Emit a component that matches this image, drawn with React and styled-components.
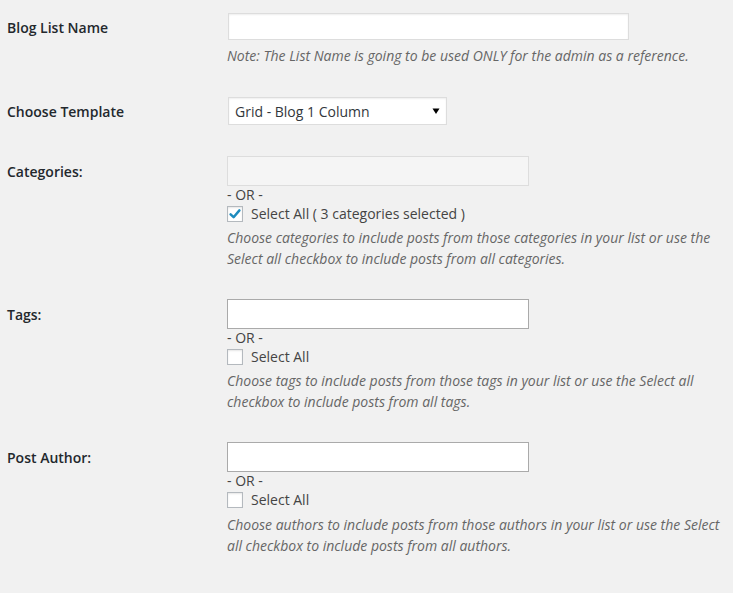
import React from 'react'
import styled, { createGlobalStyle } from 'styled-components'

const GlobalStyle = createGlobalStyle`
    html, body {
        margin:0;
        padding:0;
        background:#f1f1f1;
    }
    body {
        font-family:"Open Sans", "Liberation Sans", sans-serif;
        font-size:14px;
        color:#444;
        overflow:hidden;
    }
`

const fields = [
    { label: 'Categories:', key: 'cat', disabled: true, checked: true, selectText: 'Select All ( 3 categories selected )',
      help: 'Choose categories to include posts from those categories in your list or use the Select all checkbox to include posts from all categories.' },
    { label: 'Tags:', key: 'tags', checked: false, selectText: 'Select All',
      help: 'Choose tags to include posts from those tags in your list or use the Select all checkbox to include posts from all tags.' },
    { label: 'Post Author:', key: 'author', checked: false, selectText: 'Select All',
      help: 'Choose authors to include posts from those authors in your list or use the Select all checkbox to include posts from all authors.' },
]

const App = () => {
    return <Page>
        <GlobalStyle/>
        <Form>
            <Row>
                <Label>Blog List Name</Label>
                <Field>
                    <TextInput type="text"/>
                    <Description $top={5}>Note: The List Name is going to be used ONLY for the admin as a reference.</Description>
                </Field>
            </Row>

            <Row>
                <Label>Choose Template</Label>
                <Field>
                    <SelectWrap>
                        <Select defaultValue="grid1">
                            <option value="grid1">Grid - Blog 1 Column</option>
                            <option value="grid2">Grid - Blog 2 Columns</option>
                        </Select>
                        <Arrow width="8" height="8" viewBox="0 0 8 8">
                            <path d="M0.5 1.5 H7.5 L4 7 Z" fill="#000"/>
                        </Arrow>
                    </SelectWrap>
                </Field>
            </Row>

            {fields.map(f =>
                <Row key={f.key}>
                    <Label>{f.label}</Label>
                    <Field>
                        <ChoiceBox $disabled={f.disabled}/>
                        <Or>- OR -</Or>
                        <CheckLine>
                            <Checkbox>
                                {f.checked &&
                                    <svg width="14" height="14" viewBox="0 0 14 14">
                                        <path d="M2.6 7.4 L5.6 10.2 L11.4 3.4" fill="none" stroke="#1e8cbe" strokeWidth="2.5" strokeLinecap="round" strokeLinejoin="round"/>
                                    </svg>
                                }
                            </Checkbox>
                            {f.selectText}
                        </CheckLine>
                        <Description>{f.help}</Description>
                    </Field>
                </Row>
            )}
        </Form>
    </Page>
}

const Page = styled.div`
    width:733px;
    height:593px;
    box-sizing:border-box;
    padding-left:7px;
`

const Form = styled.div`
    margin-top:-3px;
`

const Row = styled.div`
    display:grid;
    grid-template-columns:210px 1fr;
`

const Label = styled.div`
    padding:21.5px 10px 18.5px 0;
    line-height:1.3;
    font-weight:600;
    color:#23282d;
    font-size:14px;
`

const Field = styled.div`
    padding:15px 10px;
    line-height:1.3;
    font-size:14px;
`

const TextInput = styled.input`
    display:block;
    box-sizing:border-box;
    width:401px;
    height:27px;
    margin:1px;
    border:1px solid #ddd;
    box-shadow:inset 0 1px 2px rgba(0,0,0,.07);
    background:#fff;
    font:inherit;
    outline:none;
`

const SelectWrap = styled.div`
    position:relative;
    width:219px;
    margin:1px;
`

const Select = styled.select`
    display:block;
    box-sizing:border-box;
    width:219px;
    height:28px;
    padding:0 6px;
    border:1px solid #ddd;
    border-radius:0;
    box-shadow:inset 0 1px 2px rgba(0,0,0,.07);
    background:#fff;
    appearance:none;
    font-family:"Open Sans", "Liberation Sans", sans-serif;
    font-size:14px;
    color:#32373c;
    outline:none;
`

const Arrow = styled.svg`
    position:absolute;
    right:7px;
    top:10px;
    pointer-events:none;
`

const ChoiceBox = styled.div`
    box-sizing:border-box;
    width:302px;
    height:30px;
    border:1px solid ${p => p.$disabled ? '#ddd' : '#aaa'};
    background:${p => p.$disabled ? '#f5f5f5' : '#fff'};
`

const Or = styled.div`
    color:#444;
`

const CheckLine = styled.label`
    display:flex;
    align-items:center;
    height:19px;
    color:#444;
`

const Checkbox = styled.span`
    display:inline-flex;
    align-items:center;
    justify-content:center;
    box-sizing:border-box;
    width:16px;
    height:16px;
    margin-right:8px;
    border:1px solid #b4b9be;
    background:#fff;
    box-shadow:inset 0 1px 2px rgba(0,0,0,.1);
`

const Description = styled.p`
    margin:${p => p.$top || 4}px 0 0;
    font-style:italic;
    color:#666;
    font-size:14px;
    line-height:1.5;
`

export default App
